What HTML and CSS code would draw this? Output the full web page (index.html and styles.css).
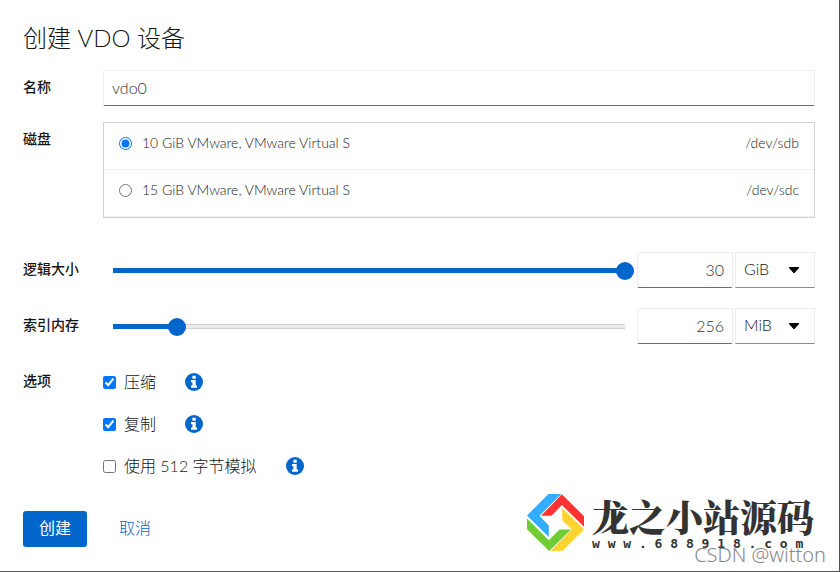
FILE: index.html
```html
<!DOCTYPE html>
<html lang="zh-CN">
<head>
  <meta charset="UTF-8" />
  <meta name="viewport" content="width=device-width, initial-scale=1.0"/>
  <title>创建 VDO 设备</title>
  <link rel="stylesheet" href="styles.css">
</head>
<body>
  <form class="dialog">
    <h1 class="title">创建 VDO 设备</h1>

    <div class="row">
      <label class="row-label" for="name">名称</label>
      <input class="text-input" id="name" type="text" value="vdo0">
    </div>

    <div class="row disks-row">
      <span class="row-label" id="disksLabel">磁盘</span>
      <div class="disk-list" role="radiogroup" aria-labelledby="disksLabel">
        <label class="disk">
          <input type="radio" name="disk" checked>
          <span class="disk-name">10 GiB VMware, VMware Virtual S</span>
          <span>/dev/sdb</span>
        </label>
        <label class="disk">
          <input type="radio" name="disk">
          <span class="disk-name">15 GiB VMware, VMware Virtual S</span>
          <span>/dev/sdc</span>
        </label>
      </div>
    </div>

    <div class="row">
      <label class="row-label" for="size">逻辑大小</label>
      <div class="size">
        <input class="slider" type="range" min="0" max="30" value="30" style="--fill: 1" aria-label="逻辑大小">
        <input class="text-input number" id="size" type="text" value="30">
        <div class="unit">
          <select aria-label="逻辑大小单位">
            <option>MiB</option>
            <option selected>GiB</option>
          </select>
          <svg class="caret" viewBox="0 0 10 6"><path d="M0 0h10v1L6 5.500Q5 6.500 4 5.500L0 1z"/></svg>
        </div>
      </div>
    </div>

    <div class="row">
      <label class="row-label" for="memory">索引内存</label>
      <div class="size">
        <input class="slider" type="range" min="0" max="2048" value="256" style="--fill: 0.125" aria-label="索引内存">
        <input class="text-input number" id="memory" type="text" value="256">
        <div class="unit">
          <select aria-label="索引内存单位">
            <option selected>MiB</option>
            <option>GiB</option>
          </select>
          <svg class="caret" viewBox="0 0 10 6"><path d="M0 0h10v1L6 5.500Q5 6.500 4 5.500L0 1z"/></svg>
        </div>
      </div>
    </div>

    <div class="row">
      <span class="row-label" id="optionsLabel">选项</span>
      <div class="options" role="group" aria-labelledby="optionsLabel">
        <div class="option">
          <label><input type="checkbox" checked>压缩</label>
          <button class="info" type="button" aria-label="压缩"><svg viewBox="0 0 18 18"><circle cx="9" cy="9" r="9"/><path d="M7.400 2.800h3.300v3H7.400zM6 7h4.700v5.600H12v2.200H6v-2.200h1.400V9.200H6z"/></svg></button>
        </div>
        <div class="option">
          <label><input type="checkbox" checked>复制</label>
          <button class="info" type="button" aria-label="复制"><svg viewBox="0 0 18 18"><circle cx="9" cy="9" r="9"/><path d="M7.400 2.800h3.300v3H7.400zM6 7h4.700v5.600H12v2.200H6v-2.200h1.400V9.200H6z"/></svg></button>
        </div>
        <div class="option">
          <label><input type="checkbox">使用 512 字节模拟</label>
          <button class="info" type="button" aria-label="使用 512 字节模拟"><svg viewBox="0 0 18 18"><circle cx="9" cy="9" r="9"/><path d="M7.400 2.800h3.300v3H7.400zM6 7h4.700v5.600H12v2.200H6v-2.200h1.400V9.200H6z"/></svg></button>
        </div>
      </div>
    </div>

    <div class="actions">
      <button class="btn primary" type="submit">创建</button>
      <button class="btn link" type="button">取消</button>
    </div>
  </form>

  <!-- Watermarks -->
  <div class="brand">
    <svg class="brand-logo" viewBox="27 27 170 170">
      <path fill="#33adff" d="M27 91L91 27h38L64 92l28 29v34z"/>
      <path fill="#ff3333" d="M131 28l66 65v32l-66-65-31 32H69z"/>
      <path fill="#ffd333" d="M132 69l65 64-64 64H97l63-64-28-28z"/>
      <path fill="#70cc33" d="M27 100l65 65 32-32h34l-65 64-66-65z"/>
    </svg>
    <div>
      <div class="brand-name">龙之小站源码</div>
      <div class="brand-url">w w w . 6 8 8 9 1 8 . c o m</div>
    </div>
  </div>
  <div class="credit">CSDN @witton</div>
</body>
</html>
```

FILE: styles.css
```css
* {
  box-sizing: border-box;
}

body {
  font-family: Lato, "Noto Sans CJK SC", sans-serif;
  font-size: 16px;
  font-weight: 300;
  line-height: 24px;
  color: #151515;
  background: #fff;
  margin: 0;
  min-height: 100vh;
  position: relative;
  border-right: 1px solid #555;
  border-bottom: 1px solid #555;
}

input, select, button {
  font: inherit;
  color: inherit;
}

.dialog {
  padding: 22px 24px 24px 23px;
  display: flex;
  flex-direction: column;
}

.title {
  font-size: 24px;
  font-weight: 300;
  line-height: 32px;
  margin: 0 0 16px;
}

.row {
  display: grid;
  grid-template-columns: 80px minmax(0, 1fr);
  margin-bottom: 20px;
}

.row:nth-of-type(1) {
  margin-bottom: 16px;
}

.disks-row {
  margin-bottom: 34px;
}

.row-label {
  font-size: 14px;
  font-weight: 500;
  line-height: 20px;
  padding-top: 7px;
}

.text-input {
  width: 100%;
  height: 36px;
  padding: 0 8px 2px;
  color: #333;
  background: #fff;
  border: 1px solid #ededed;
  border-bottom-color: #6a6e73;
  border-radius: 2px;
}

.disk-list {
  border: 1px solid #d2d2d2;
}

.disk {
  display: flex;
  align-items: center;
  gap: 10px;
  font-size: 14px;
  line-height: 20px;
  color: #222;
  padding: 10px 15px 16px;
  border-bottom: 1px solid #f0f0f0;
}

.disk input {
  margin: 0;
}

.disk-name {
  flex: 1;
}

/* Sliders */
.size {
  display: grid;
  grid-template-columns: minmax(0, 1fr) 96px 80px;
  align-items: center;
  gap: 2px;
}

.slider {
  appearance: none;
  height: 20px;
  min-width: 0;
  margin: 0 1px;
  background:
    linear-gradient(#06c, #06c) 9px 8px / calc((100% - 18px) * var(--fill)) 5px no-repeat,
    linear-gradient(#d2d2d2, #d2d2d2 1px, #ebebeb 1px, #ebebeb 4px, #d2d2d2 4px) 9px 8px / calc(100% - 18px) 5px no-repeat;
}

.slider::-webkit-slider-runnable-track {
  padding-top: 2px;
}

.slider::-webkit-slider-thumb {
  appearance: none;
  width: 18px;
  height: 18px;
  border-radius: 50%;
  background: #06c;
}

.number {
  text-align: right;
}

.unit {
  position: relative;
}

.unit select {
  display: block;
  appearance: none;
  width: 100%;
  height: 36px;
  padding: 0 8px 2px;
  background: #fff;
  border: 1px solid #ededed;
  border-bottom-color: #8a8d90;
  border-radius: 0;
}

.caret {
  position: absolute;
  right: 16px;
  top: 15px;
  width: 10px;
  height: 6px;
  pointer-events: none;
}

/* Options */
.options {
  display: grid;
  gap: 18px;
  padding-top: 6px;
}

.option {
  display: flex;
  align-items: center;
  gap: 29px;
}

.option label {
  display: flex;
  align-items: center;
  gap: 8px;
}

.option input {
  margin: 0;
}

.info {
  width: 18px;
  height: 18px;
  padding: 0;
  border: none;
  background: none;
}

.info svg {
  display: block;
}

.info circle {
  fill: #06c;
}

.info path {
  fill: #fff;
}

.actions {
  display: flex;
  gap: 16px;
  margin-top: 13px;
}

.btn {
  height: 36px;
  padding: 0 16px 2px;
  border: none;
  border-radius: 3px;
}

.primary {
  color: #fff;
  background: #06c;
  font-weight: 400;
}

.link {
  color: #06c;
  background: none;
}

/* Watermarks */
.brand {
  position: absolute;
  right: 25px;
  bottom: 20px;
  display: flex;
  align-items: center;
  gap: 8px;
  color: #333;
}

.brand-logo {
  width: 57px;
  height: 57px;
}

.brand-name {
  font-family: "Noto Serif CJK SC", "Noto Sans CJK SC", serif;
  font-size: 37px;
  font-weight: 900;
  line-height: 42px;
}

.brand-url {
  font-family: "DejaVu Sans Mono", monospace;
  font-size: 13px;
  font-weight: 700;
  line-height: 13px;
}

.credit {
  position: absolute;
  right: 13px;
  bottom: 4px;
  font-family: "Noto Sans", "Open Sans", sans-serif;
  font-size: 20px;
  color: #888;
  text-shadow: 0 0 1px #fff;
}
```
